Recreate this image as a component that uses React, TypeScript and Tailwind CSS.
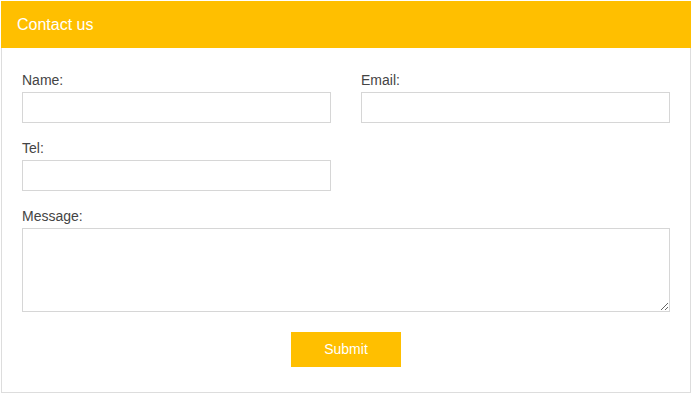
export default function App() {
  return (
    <div className="pl-px pt-px bg-white" style={{ fontFamily: '"Liberation Sans", Arial, sans-serif' }}>
      <div className="w-[690px]">
        <div className="h-[47px] bg-[#ffbf00] flex items-center px-4">
          <h1 className="text-white text-[16px] leading-5">Contact us</h1>
        </div>
        <form className="border-x border-b border-[#dddddd] px-5 pt-[22px] pb-[25px]" onSubmit={(e) => e.preventDefault()}>
          <div className="grid grid-cols-[309px_309px] gap-x-[30px] gap-y-[15px] text-[#444444]">
            <div>
              <label className="block text-[14px] leading-5 mb-[2px]">Name:</label>
              <input className="block w-full h-[31px] border border-[#d6d6d6] outline-none" />
            </div>
            <div>
              <label className="block text-[14px] leading-5 mb-[2px]">Email:</label>
              <input className="block w-full h-[31px] border border-[#d6d6d6] outline-none" />
            </div>
            <div>
              <label className="block text-[14px] leading-5 mb-[2px]">Tel:</label>
              <input className="block w-full h-[31px] border border-[#d6d6d6] outline-none" />
            </div>
            <div />
            <div className="col-span-2">
              <label className="block text-[14px] leading-5 mb-[2px]">Message:</label>
              <textarea className="block w-full h-[84px] border border-[#d6d6d6] outline-none resize-y" />
            </div>
          </div>
          <div className="flex justify-center mt-[20px]">
            <button type="submit" className="w-[110px] h-[35px] bg-[#ffbf00] text-white text-[14px]">
              Submit
            </button>
          </div>
        </form>
      </div>
    </div>
  );
}
